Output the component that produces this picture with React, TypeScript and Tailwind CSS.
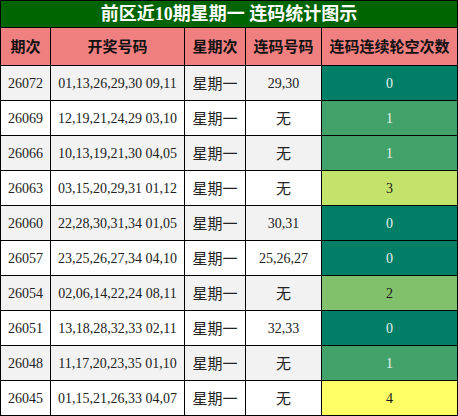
const rows = [
  { issue: "26072", nums: "01,13,26,29,30 09,11", link: "29,30", gap: 0 },
  { issue: "26069", nums: "12,19,21,24,29 03,10", link: "无", gap: 1 },
  { issue: "26066", nums: "10,13,19,21,30 04,05", link: "无", gap: 1 },
  { issue: "26063", nums: "03,15,20,29,31 01,12", link: "无", gap: 3 },
  { issue: "26060", nums: "22,28,30,31,34 01,05", link: "30,31", gap: 0 },
  { issue: "26057", nums: "23,25,26,27,34 04,10", link: "25,26,27", gap: 0 },
  { issue: "26054", nums: "02,06,14,22,24 08,11", link: "无", gap: 2 },
  { issue: "26051", nums: "13,18,28,32,33 02,11", link: "32,33", gap: 0 },
  { issue: "26048", nums: "11,17,20,23,35 01,10", link: "无", gap: 1 },
  { issue: "26045", nums: "01,15,21,26,33 04,07", link: "无", gap: 4 },
];

// heat colours for the gap column
const gapStyle: Record<number, string> = {
  0: "bg-[#007f66] text-[#e6f2ee]",
  1: "bg-[#43a16a] text-[#e6f2ee]",
  2: "bg-[#82c16b] text-[#1a1a1a]",
  3: "bg-[#c4e36a] text-[#1a1a1a]",
  4: "bg-[#ffff66] text-[#1a1a1a]",
};

const headers = ["期次", "开奖号码", "星期次", "连码号码", "连码连续轮空次数"];

export default function App() {
  return (
    <div
      className="w-[458px] h-[416px] bg-black p-px flex flex-col gap-px"
      style={{ fontFamily: '"Liberation Serif", "Noto Sans CJK SC", serif' }}
    >
      {/* Title */}
      <div className="h-[26px] bg-[#006400] flex items-center justify-center text-white font-bold text-[18px] leading-none">
        前区近10期星期一 连码统计图示
      </div>

      <div className="grid grid-cols-[49px_133px_60px_75px_135px] grid-rows-[37px_repeat(10,34px)] gap-px">
        {headers.map((h) => (
          <div
            key={h}
            className="bg-[#f08080] flex items-center justify-center text-[15px] font-bold text-[#111]"
            style={{ fontFamily: '"Noto Sans CJK SC", sans-serif' }}
          >
            {h}
          </div>
        ))}

        {rows.map((r, i) => {
          const bg = i % 2 === 0 ? "bg-[#f2f2f2]" : "bg-white";
          return [
            <div key={r.issue + "a"} className={`${bg} flex items-center justify-center text-[14px] text-[#222]`}>
              {r.issue}
            </div>,
            <div key={r.issue + "b"} className={`${bg} flex items-center justify-center text-[14px] text-[#222]`}>
              {r.nums}
            </div>,
            <div
              key={r.issue + "c"}
              className={`${bg} flex items-center justify-center text-[15px] text-[#222]`}
              style={{ fontFamily: '"Noto Sans CJK SC", sans-serif' }}
            >
              星期一
            </div>,
            <div key={r.issue + "d"} className={`${bg} flex items-center justify-center text-[14px] text-[#222]`}>
              {r.link === "无" ? (
                <span className="text-[15px]" style={{ fontFamily: '"Noto Sans CJK SC", sans-serif' }}>
                  无
                </span>
              ) : (
                r.link
              )}
            </div>,
            <div key={r.issue + "e"} className={`${gapStyle[r.gap]} flex items-center justify-center text-[14px]`}>
              {r.gap}
            </div>,
          ];
        })}
      </div>
    </div>
  );
}
